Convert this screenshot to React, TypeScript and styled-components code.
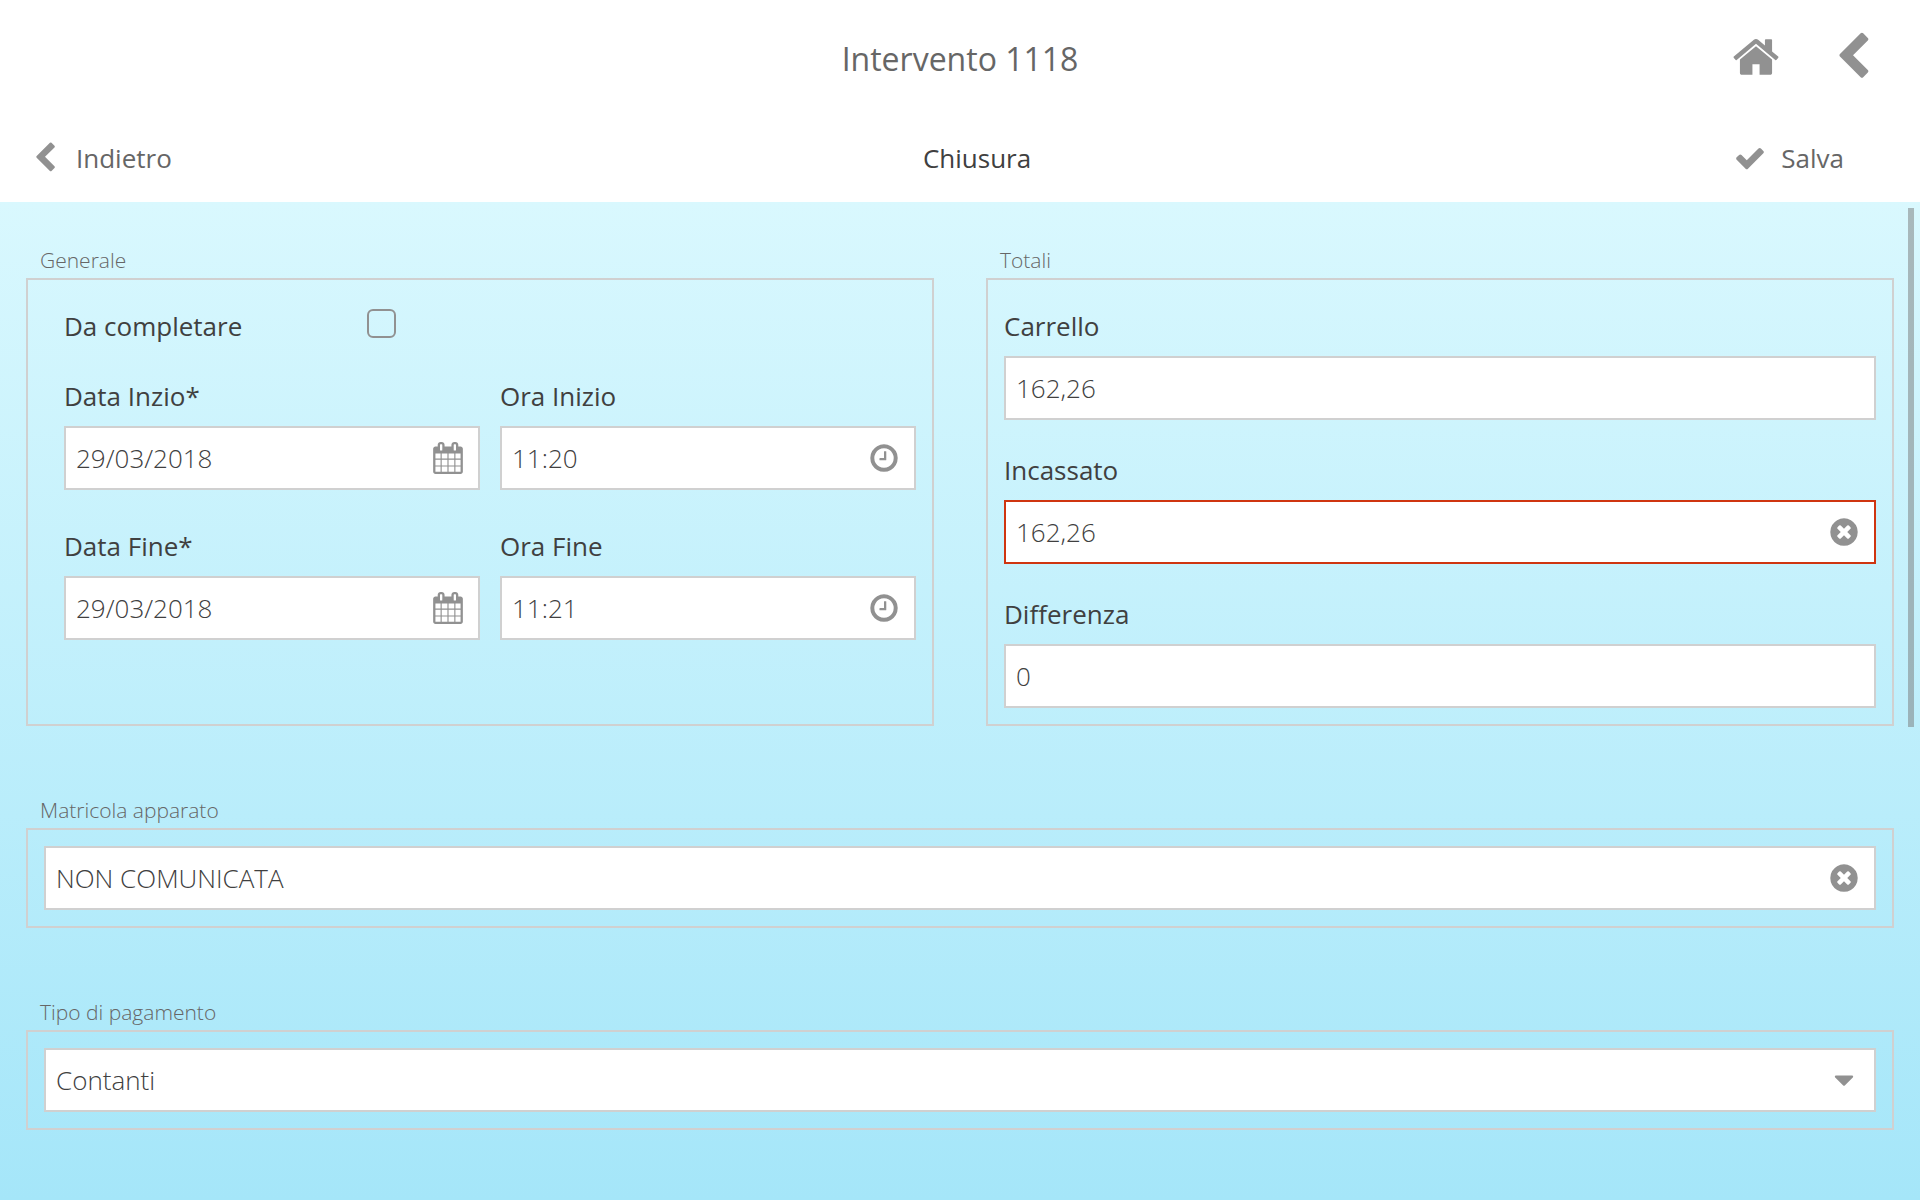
import React from "react";
import styled, { createGlobalStyle } from "styled-components";

const GlobalStyle = createGlobalStyle`
  *, *::before, *::after { box-sizing: border-box; }
  body { margin: 0; background: #fff; }
  body, button, input, select {
    font-family: "Open Sans", "Noto Sans", sans-serif;
    font-size: 26px;
    line-height: 40px;
    color: #404040;
  }
`;

const glyphs = {
  home: "M1472 992v480q0 26-19 45t-45 19h-384v-384h-256v384h-384q-26 0-45-19t-19-45v-480q0-1 .5-3t.5-3l575-474 575 474q1 2 1 6zm223-69l-62 74q-8 9-21 11h-3q-13 0-21-7l-692-577-692 577q-12 8-24 7-13-2-21-11l-62-74q-8-10-7-23.5t11-21.5l719-599q32-26 76-26t76 26l244 204v-195q0-14 9-23t23-9h192q14 0 23 9t9 23v408l219 182q10 8 11 21.5t-7 23.5z",
  back: "M1427 301l-531 531 531 531q19 19 19 45t-19 45l-166 166q-19 19-45 19t-45-19l-742-742q-19-19-19-45t19-45l742-742q19-19 45-19t45 19l166 166q19 19 19 45t-19 45z",
  check:
    "M1671 566q0 40-28 68l-724 724-136 136q-28 28-68 28t-68-28l-136-136-362-362q-28-28-28-68t28-68l136-136q28-28 68-28t68 28l294 295 656-657q28-28 68-28t68 28l136 136q28 28 28 68z",
  calendar:
    "M192 1664h288v-288h-288v288zm352 0h320v-288h-320v288zm-352-352h288v-320h-288v320zm352 0h320v-320h-320v320zm-352-384h288v-288h-288v288zm736 736h320v-288h-320v288zm-384-736h320v-288h-320v288zm768 736h288v-288h-288v288zm-384-352h320v-320h-320v320zm-352-864v-288q0-13-9.5-22.5t-22.5-9.5h-64q-13 0-22.5 9.5t-9.5 22.5v288q0 13 9.5 22.5t22.5 9.5h64q13 0 22.5-9.5t9.5-22.5zm736 864h288v-320h-288v320zm-384-384h320v-288h-320v288zm384 0h288v-288h-288v288zm32-480v-288q0-13-9.5-22.5t-22.5-9.5h-64q-13 0-22.5 9.5t-9.5 22.5v288q0 13 9.5 22.5t22.5 9.5h64q13 0 22.5-9.5t9.5-22.5zm384-64v1280q0 52-38 90t-90 38h-1408q-52 0-90-38t-38-90v-1280q0-52 38-90t90-38h128v-96q0-66 47-113t113-47h64q66 0 113 47t47 113v96h384v-96q0-66 47-113t113-47h64q66 0 113 47t47 113v96h128q52 0 90 38t38 90z",
  clock:
    "M1024 544v448q0 14-9 23t-23 9h-320q-14 0-23-9t-9-23v-64q0-14 9-23t23-9h224v-352q0-14 9-23t23-9h64q14 0 23 9t9 23zm416 352q0-148-73-273t-198-198-273-73-273 73-198 198-73 273 73 273 198 198 273 73 273-73 198-198 73-273zm224 0q0 209-103 385.5t-279.5 279.5-385.5 103-385.5-103-279.5-279.5-103-385.5 103-385.5 279.5-279.5 385.5-103 385.5 103 279.5 279.5 103 385.5z",
  clear:
    "M1277 1122q0-26-19-45l-181-181 181-181q19-19 19-45 0-27-19-46l-90-90q-19-19-46-19-26 0-45 19l-181 181-181-181q-19-19-45-19-27 0-46 19l-90 90q-19 19-19 46 0 26 19 45l181 181-181 181q-19 19-19 45 0 27 19 46l90 90q19 19 46 19 26 0 45-19l181-181 181 181q19 19 45 19 27 0 46-19l90-90q19-19 19-46zm387-226q0 209-103 385.5t-279.5 279.5-385.5 103-385.5-103-279.5-279.5-103-385.5 103-385.5 279.5-279.5 385.5-103 385.5 103 279.5 279.5 103 385.5z",
  caret:
    "M1408 704q0 26-19 45l-448 448q-19 19-45 19t-45-19l-448-448q-19-19-19-45t19-45 45-19h896q26 0 45 19t19 45z",
};

type GlyphName = keyof typeof glyphs;

const Svg = styled.svg<{ $size: number }>`
  display: block;
  flex: none;
  width: ${(p) => p.$size}px;
  height: ${(p) => p.$size}px;
  fill: #919191;
`;

function Icon({ name, size = 32 }: { name: GlyphName; size?: number }) {
  return (
    <Svg $size={size} viewBox="0 0 1792 1792" aria-hidden="true">
      <path d={glyphs[name]} />
    </Svg>
  );
}

const Page = styled.div`
  min-height: 100vh;
  display: flex;
  flex-direction: column;
`;

const Header = styled.header`
  display: grid;
  grid-template-columns: 1fr auto 1fr;
  align-items: center;
  height: 114px;
  padding: 0 42px;
`;

const Title = styled.h1`
  grid-column: 2;
  margin: 0;
  padding-top: 4px;
  font-size: 32px;
  font-weight: 400;
  line-height: 44px;
  color: #666;
`;

const HeaderActions = styled.div`
  display: flex;
  justify-content: flex-end;
  gap: 47px;
`;

const PlainButton = styled.button`
  display: flex;
  align-items: center;
  gap: 15px;
  padding: 0;
  border: 0;
  background: none;
  color: #666;
  cursor: pointer;
`;

const Toolbar = styled.nav`
  display: flex;
  align-items: center;
  height: 88px;
  padding: 0 76px 0 29px;
`;

const ToolbarTitle = styled.h2`
  flex: 1;
  margin: 0 0 0 48px;
  font-size: 26px;
  font-weight: 400;
  text-align: center;
`;

const Content = styled.main`
  position: relative;
  flex: 1;
  display: flex;
  flex-direction: column;
  gap: 70px;
  padding: 44px 26px 70px;
  background: linear-gradient(#d9f8fe, #a5e6f9);
`;

const ScrollThumb = styled.div`
  position: absolute;
  top: 6px;
  right: 6px;
  width: 6px;
  height: 52%;
  background: rgba(120, 120, 120, 0.5);
`;

const Columns = styled.div`
  display: grid;
  grid-template-columns: 1fr 1fr;
  gap: 52px;
`;

const Group = styled.section`
  display: flex;
  flex-direction: column;
  gap: 4px;
`;

const GroupTitle = styled.h3`
  margin: 0;
  padding-left: 14px;
  font-size: 21px;
  font-weight: 300;
  line-height: 28px;
  color: #666;
`;

const Panel = styled.div<{ $pad?: string; $gap?: number }>`
  flex: 1;
  display: flex;
  flex-direction: column;
  gap: ${(p) => p.$gap ?? 0}px;
  padding: ${(p) => p.$pad ?? "16px"};
  border: 2px solid #d0d0d0;
`;

const CheckRow = styled.div`
  display: flex;
  align-items: flex-start;
`;

const CheckLabel = styled.label`
  width: 303px;
`;

const Checkbox = styled.input`
  appearance: none;
  width: 29px;
  height: 29px;
  margin: 3px 0 0;
  border: 2px solid #919191;
  border-radius: 6px;

  &:checked {
    background: #919191;
  }
`;

const FieldGrid = styled.div`
  display: grid;
  grid-template-columns: 1fr 1fr;
  gap: 36px 20px;
`;

const FieldBox = styled.div`
  display: flex;
  flex-direction: column;
  gap: 10px;
`;

const Control = styled.div<{ $invalid?: boolean }>`
  position: relative;
  display: flex;
  align-items: center;
  height: 64px;
  padding-right: 14px;
  border: 2px solid ${(p) => (p.$invalid ? "#cf3510" : "#d0d0d0")};
  background: #fff;
`;

const TextInput = styled.input`
  flex: 1;
  min-width: 0;
  height: 100%;
  padding: 0 10px;
  border: 0;
  outline: 0;
  background: none;
  font-weight: 300;
`;

const Select = styled.select`
  appearance: none;
  flex: 1;
  height: 100%;
  padding: 0 10px;
  border: 0;
  outline: 0;
  background: none;
  font-weight: 300;
`;

interface InputProps {
  id: string;
  value: string;
  icon?: GlyphName;
  action?: string;
  invalid?: boolean;
}

function Input({ id, value, icon, action, invalid }: InputProps) {
  return (
    <Control $invalid={invalid}>
      <TextInput id={id} type="text" defaultValue={value} aria-invalid={invalid} />
      {icon && (
        <PlainButton type="button" aria-label={action}>
          <Icon name={icon} />
        </PlainButton>
      )}
    </Control>
  );
}

function Field({ label, ...input }: InputProps & { label: string }) {
  return (
    <FieldBox>
      <label htmlFor={input.id}>{label}</label>
      <Input {...input} />
    </FieldBox>
  );
}

export default function App() {
  return (
    <Page>
      <GlobalStyle />
      <Header>
        <Title>Intervento 1118</Title>
        <HeaderActions>
          <PlainButton type="button" aria-label="Home">
            <Icon name="home" size={50} />
          </PlainButton>
          <PlainButton type="button" aria-label="Indietro">
            <Icon name="back" size={50} />
          </PlainButton>
        </HeaderActions>
      </Header>
      <Toolbar>
        <PlainButton type="button">
          <Icon name="back" />
          Indietro
        </PlainButton>
        <ToolbarTitle>Chiusura</ToolbarTitle>
        <PlainButton type="button">
          <Icon name="check" />
          Salva
        </PlainButton>
      </Toolbar>
      <Content>
        <Columns>
          <Group>
            <GroupTitle>Generale</GroupTitle>
            <Panel $pad="26px 16px 16px 36px" $gap={30}>
              <CheckRow>
                <CheckLabel htmlFor="da-completare">Da completare</CheckLabel>
                <Checkbox id="da-completare" type="checkbox" />
              </CheckRow>
              <FieldGrid>
                <Field id="data-inizio" label="Data Inzio*" value="29/03/2018" icon="calendar" action="Scegli data" />
                <Field id="ora-inizio" label="Ora Inizio" value="11:20" icon="clock" action="Scegli ora" />
                <Field id="data-fine" label="Data Fine*" value="29/03/2018" icon="calendar" action="Scegli data" />
                <Field id="ora-fine" label="Ora Fine" value="11:21" icon="clock" action="Scegli ora" />
              </FieldGrid>
            </Panel>
          </Group>
          <Group>
            <GroupTitle>Totali</GroupTitle>
            <Panel $pad="26px 16px 16px" $gap={30}>
              <Field id="carrello" label="Carrello" value="162,26" />
              <Field id="incassato" label="Incassato" value="162,26" icon="clear" action="Cancella" invalid />
              <Field id="differenza" label="Differenza" value="0" />
            </Panel>
          </Group>
        </Columns>
        <Group>
          <GroupTitle as="label" htmlFor="matricola">
            Matricola apparato
          </GroupTitle>
          <Panel>
            <Input id="matricola" value="NON COMUNICATA" icon="clear" action="Cancella" />
          </Panel>
        </Group>
        <Group>
          <GroupTitle as="label" htmlFor="pagamento">
            Tipo di pagamento
          </GroupTitle>
          <Panel>
            <Control>
              <Select id="pagamento" defaultValue="Contanti">
                <option>Contanti</option>
              </Select>
              <Icon name="caret" />
            </Control>
          </Panel>
        </Group>
        <ScrollThumb />
      </Content>
    </Page>
  );
}
